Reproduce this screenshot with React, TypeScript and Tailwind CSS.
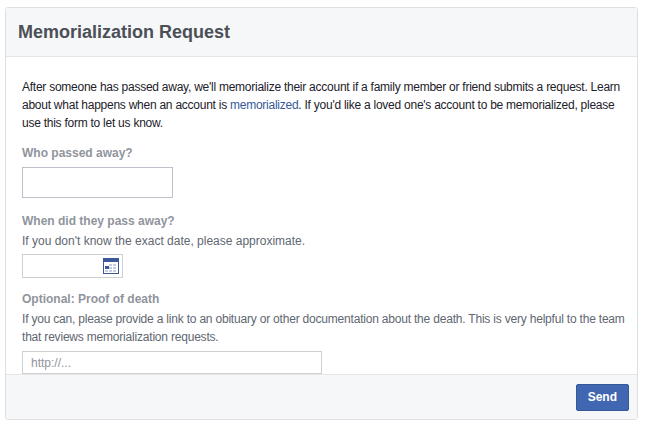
export default function App() {
  return (
    <div className="w-[651px] h-[426px] bg-white pt-[7px] pl-[5px]" style={{ fontFamily: '"Liberation Sans", Arial, sans-serif' }}>
      <div className="w-[633px] h-[413px] border border-[#dddfe2] rounded-[3px] flex flex-col">
        <div className="h-[49px] bg-[#f6f7f9] border-b border-[#e5e5e5] flex items-center px-[12px]">
          <h1 className="text-[18px] font-bold text-[#4b4f56]">Memorialization Request</h1>
        </div>
        <div className="flex-1 pl-[16px] pr-[4px] pt-[21px] text-[12px] leading-[18px] text-[#1d2129]">
          <p className="tracking-[-0.25px]">
            After someone has passed away, we'll memorialize their account if a family member or friend submits a request. Learn about what happens when an account is <span className="text-[#365899]">memorialized</span>. If you'd like a loved one's account to be memorialized, please use this form to let us know.
          </p>
          <div className="mt-[12px] font-bold text-[#90949c]">Who passed away?</div>
          <input className="mt-[5px] block w-[151px] h-[31px] border border-[#bdc1c9] outline-none" />
          <div className="mt-[14px] font-bold text-[#90949c]">When did they pass away?</div>
          <div className="mt-[2px] text-[#616770]">If you don't know the exact date, please approximate.</div>
          <div className="mt-[4px] w-[101px] h-[24px] border border-[#ccd0d5] flex items-center justify-end pr-[3px]">
            <svg width="16" height="16" viewBox="0 0 16 16">
              <rect x="0.5" y="0.5" width="15" height="15" fill="#fff" stroke="#3b5998" />
              <rect x="0" y="0" width="16" height="4" fill="#3b5998" />
              <g fill="#c5cde0">
                <rect x="6" y="6" width="3" height="2" /><rect x="10" y="6" width="3" height="2" />
                <rect x="6" y="9" width="3" height="2" /><rect x="10" y="9" width="3" height="2" />
                <rect x="2" y="12" width="3" height="2" /><rect x="6" y="12" width="3" height="2" /><rect x="10" y="12" width="3" height="2" />
              </g>
              <rect x="2" y="8" width="4" height="3" fill="#3b5998" />
            </svg>
          </div>
          <div className="mt-[12px] font-bold text-[#90949c]">Optional: Proof of death</div>
          <div className="mt-[2px] text-[#616770] tracking-[-0.2px]">If you can, please provide a link to an obituary or other documentation about the death. This is very helpful to the team that reviews memorialization requests.</div>
          <input placeholder="http://..." className="mt-[5px] block w-[300px] h-[23px] border border-[#ccd0d5] px-[8px] text-[12px] placeholder:text-[#90949c] outline-none" />
        </div>
        <div className="h-[45px] bg-[#f6f7f9] border-t border-[#e5e5e5] flex items-center justify-end pr-[8px]">
          <button className="h-[27px] px-[11px] rounded-[2px] border border-[#365899] bg-[#4267b2] text-white text-[12px] font-bold">Send</button>
        </div>
      </div>
    </div>
  );
}
